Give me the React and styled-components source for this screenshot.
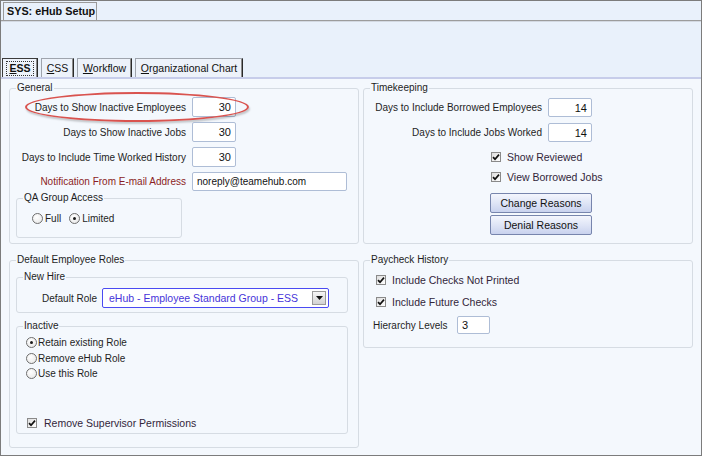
import React from "react";
import styled, { createGlobalStyle } from "styled-components";

const GlobalStyle = createGlobalStyle`
  html, body {
    margin: 0;
    padding: 0;
    background: #ffffff;
  }
`;

const Window = styled.div`
  width: 702px;
  height: 456px;
  box-sizing: border-box;
  border: 1px solid #7c7c7c;
  display: flex;
  flex-direction: column;
  background: #f4f8fd;
  font-family: "Liberation Sans", Arial, sans-serif;
  font-size: 10px;
  color: #1e1e1e;
  overflow: hidden;
`;

const Header = styled.div`
  background: #e9f1fb;
`;

const TitleBar = styled.div`
  height: 20px;
  box-sizing: border-box;
  padding-left: 2px;
  display: flex;
  align-items: flex-end;
  border-bottom: 1px solid #9c9c9c;
  box-shadow: 0 1px 0 #d3d9e2;
`;

const TitleTab = styled.div`
  width: 94px;
  height: 18px;
  box-sizing: border-box;
  border: 1px solid #9a9a9a;
  border-bottom: none;
  background: #e8f0fb;
  font-weight: bold;
  font-size: 10.8px;
  line-height: 17px;
  padding-left: 3px;
  color: #111;
`;

const TabStrip = styled.div`
  padding: 37px 0 0 1px;
  display: flex;
  align-items: flex-end;
  gap: 3px;
  border-bottom: 2px solid #c7cdea;
`;

const Tab = styled.div`
  height: 19px;
  box-sizing: border-box;
  width: ${(p) => p.$w}px;
  border: 1px solid ${(p) => (p.$active ? "#3c3c3c" : "#9fa4ad")};
  border-right: 1px solid #2a2a2a;
  border-bottom: none;
  box-shadow: inset -1px 0 0 #8c8c8c;
  background: ${(p) => (p.$active ? "#eef3fb" : "#edf2fa")};
  display: flex;
  align-items: center;
  justify-content: center;
  font-size: 10.5px;
  font-weight: ${(p) => (p.$active ? "bold" : "normal")};
  color: #111;
`;

const FocusText = styled.span`
  outline: 1px dotted #333;
  outline-offset: 0px;
  padding: 0 2px;
  line-height: 13px;
`;

const Content = styled.div`
  flex: 1;
  display: grid;
  grid-template-columns: 350px 330px;
  column-gap: 4px;
  row-gap: 10px;
  align-content: start;
  align-items: start;
  padding: 3px 0 0 8px;
`;

const Group = styled.fieldset`
  margin: ${(p) => p.$margin || "0"};
  padding: 0;
  min-width: 0;
  width: ${(p) => p.$w}px;
  height: ${(p) => p.$h}px;
  box-sizing: border-box;
  border: 1px solid #d6dce3;
  border-radius: 3px;
`;

const Legend = styled.legend`
  margin-left: 6px;
  padding: 0 1px;
  font-size: 10px;
  line-height: 12px;
  color: #1e1e1e;
`;

const Stack = styled.div`
  display: flex;
  flex-direction: column;
  gap: ${(p) => p.$gap || 0}px;
  padding: ${(p) => p.$pad || "0"};
  height: ${(p) => (p.$fill ? "100%" : "auto")};
  box-sizing: border-box;
`;

const FieldRow = styled.div`
  position: relative;
  display: flex;
  align-items: center;
  gap: ${(p) => (p.$gap === undefined ? 6 : p.$gap)}px;
`;

const Label = styled.div`
  width: ${(p) => p.$w}px;
  text-align: ${(p) => p.$align || "right"};
  color: ${(p) => p.$color || "#1e1e1e"};
  white-space: nowrap;
`;

const Input = styled.div`
  width: ${(p) => p.$w}px;
  height: ${(p) => p.$h || 20}px;
  box-sizing: border-box;
  border: 1px solid #aebdd6;
  border-radius: 2px;
  background: #ffffff;
  display: flex;
  align-items: center;
  justify-content: ${(p) => (p.$left ? "flex-start" : "flex-end")};
  padding: 0 4px;
  font-size: ${(p) => p.$fs || 11}px;
  color: #111;
`;

const Highlight = styled.div`
  position: absolute;
  left: 15px;
  top: -5px;
  width: 224px;
  height: 30px;
  box-sizing: border-box;
  border: 2px solid #d9534f;
  border-radius: 50%;
  box-shadow: 1px 2px 2px rgba(0, 0, 0, 0.2);
  pointer-events: none;
`;

const OptionRow = styled.div`
  display: flex;
  align-items: center;
  height: 13px;
  padding-left: ${(p) => p.$indent || 0}px;
  margin-top: ${(p) => p.$top || 0}px;
`;

const RadioCircle = styled.span`
  width: 11px;
  height: 11px;
  box-sizing: border-box;
  border-radius: 50%;
  border: 1px solid #6e6e6e;
  background: radial-gradient(circle at 40% 35%, #ffffff, #e4e4e4);
  display: inline-flex;
  align-items: center;
  justify-content: center;
  margin-right: ${(p) => p.$gap || 2}px;
  flex-shrink: 0;

  &::after {
    content: "";
    width: 3px;
    height: 3px;
    border-radius: 50%;
    background: ${(p) => (p.$on ? "#1a1a1a" : "transparent")};
  }
`;

const CheckBox = styled.span`
  width: 10px;
  height: 10px;
  box-sizing: border-box;
  border: 1px solid #8a8a8a;
  background: linear-gradient(135deg, #dedede, #ffffff);
  display: inline-flex;
  align-items: center;
  justify-content: center;
  margin-right: ${(p) => p.$gap || 6}px;
  flex-shrink: 0;
`;

const CheckText = styled.span`
  color: #32263a;
  font-size: 10.5px;
  white-space: nowrap;
`;

const Spacer = styled.span`
  width: ${(p) => p.$w}px;
`;

const Button = styled.div`
  width: 102px;
  height: 20px;
  box-sizing: border-box;
  border: 1px solid #7785ad;
  border-radius: 2px;
  background: linear-gradient(#f4f6fd, #dfe5f6 50%, #c9d2ee);
  display: flex;
  align-items: center;
  justify-content: center;
  font-size: 10.5px;
  color: #111;
`;

const Select = styled.div`
  width: 227px;
  height: 20px;
  box-sizing: border-box;
  border: 1px solid #4b4bf2;
  border-radius: 2px;
  background: #ffffff;
  display: flex;
  align-items: center;
  padding: 0 2px 0 6px;
  font-size: 10.5px;
  color: #4634d9;
`;

const SelectText = styled.span`
  flex: 1;
  white-space: nowrap;
`;

const DropButton = styled.span`
  width: 14px;
  height: 14px;
  box-sizing: border-box;
  border: 1px solid #9a9a9a;
  background: linear-gradient(#f6f6f6, #d2d2d2);
  display: inline-flex;
  align-items: center;
  justify-content: center;
`;

const Check = () => (
  <svg width="8" height="8" viewBox="0 0 8 8">
    <path d="M1 4.2 L3 6.2 L7 1.6" fill="none" stroke="#111" strokeWidth="1.7" />
  </svg>
);

const Checked = ({ children, indent, top, gap }) => (
  <OptionRow $indent={indent} $top={top}>
    <CheckBox $gap={gap}>
      <Check />
    </CheckBox>
    <CheckText>{children}</CheckText>
  </OptionRow>
);

const Radio = ({ on, children, gap }) => (
  <>
    <RadioCircle $on={on} $gap={gap} />
    <span>{children}</span>
  </>
);

export default function App() {
  return (
    <>
      <GlobalStyle />
      <Window>
        <Header>
          <TitleBar>
            <TitleTab>SYS: eHub Setup</TitleTab>
          </TitleBar>
          <TabStrip>
            <Tab $w={36} $active>
              <FocusText>
                <u>E</u>SS
              </FocusText>
            </Tab>
            <Tab $w={33}>
              <u>C</u>SS
            </Tab>
            <Tab $w={55}>
              <u>W</u>orkflow
            </Tab>
            <Tab $w={108}>
              <u>O</u>rganizational Chart
            </Tab>
          </TabStrip>
        </Header>

        <Content>
          <Group $w={350} $h={162}>
            <Legend>General</Legend>
            <Stack $gap={5} $pad="3px 0 0 0">
              <FieldRow>
                <Highlight />
                <Label $w={176}>Days to Show Inactive Employees</Label>
                <Input $w={44}>30</Input>
              </FieldRow>
              <FieldRow>
                <Label $w={176}>Days to Show Inactive Jobs</Label>
                <Input $w={44}>30</Input>
              </FieldRow>
              <FieldRow>
                <Label $w={176}>Days to Include Time Worked History</Label>
                <Input $w={44}>30</Input>
              </FieldRow>
              <FieldRow>
                <Label $w={176} $color="#8b1d24">
                  Notification From E-mail Address
                </Label>
                <Input $w={155} $h={19} $left $fs={10}>
                  noreply@teamehub.com
                </Input>
              </FieldRow>
            </Stack>
            <Group $w={166} $h={46} $margin="1px 0 0 6px">
              <Legend>QA Group Access</Legend>
              <OptionRow $indent={15} $top={8}>
                <Radio>Full</Radio>
                <Spacer $w={8} />
                <Radio on>Limited</Radio>
              </OptionRow>
            </Group>
          </Group>

          <Group $w={330} $h={162}>
            <Legend>Timekeeping</Legend>
            <Stack $gap={6} $pad="4px 0 0 0">
              <FieldRow>
                <Label $w={178}>Days to Include Borrowed Employees</Label>
                <Input $w={44} $h={19}>14</Input>
              </FieldRow>
              <FieldRow>
                <Label $w={178}>Days to Include Jobs Worked</Label>
                <Input $w={44} $h={19}>14</Input>
              </FieldRow>
            </Stack>
            <Stack $pad="0 0 0 126px">
              <Checked indent={1} top={8}>Show Reviewed</Checked>
              <Checked indent={1} top={7}>View Borrowed Jobs</Checked>
              <Stack $gap={2} $pad="10px 0 0 0">
                <Button>Change Reasons</Button>
                <Button>Denial Reasons</Button>
              </Stack>
            </Stack>
          </Group>

          <Group $w={350} $h={194}>
            <Legend>Default Employee Roles</Legend>
            <Group $w={332} $h={42} $margin="5px 0 0 6px">
              <Legend>New Hire</Legend>
              <FieldRow $gap={5} style={{ marginTop: 5 }}>
                <Label $w={80}>Default Role</Label>
                <Select>
                  <SelectText>eHub - Employee Standard Group - ESS</SelectText>
                  <DropButton>
                    <svg width="7" height="4" viewBox="0 0 7 4">
                      <path d="M0 0 H7 L3.5 4 Z" fill="#111" />
                    </svg>
                  </DropButton>
                </Select>
              </FieldRow>
            </Group>
            <Group $w={332} $h={114} $margin="7px 0 0 6px">
              <Legend>Inactive</Legend>
              <Stack $fill $pad="4px 0 4px 0">
                <OptionRow $indent={9}>
                  <Radio on gap={1}>Retain existing Role</Radio>
                </OptionRow>
                <OptionRow $indent={9} $top={2.5}>
                  <Radio gap={1}>Remove eHub Role</Radio>
                </OptionRow>
                <OptionRow $indent={9} $top={2.5}>
                  <Radio gap={1}>Use this Role</Radio>
                </OptionRow>
                <Stack style={{ marginTop: "auto" }}>
                  <Checked indent={10} gap={7}>
                    Remove Supervisor Permissions
                  </Checked>
                </Stack>
              </Stack>
            </Group>
          </Group>

          <Group $w={330} $h={94}>
            <Legend>Paycheck History</Legend>
            <Checked indent={12} top={7} gap={6}>
              Include Checks Not Printed
            </Checked>
            <Checked indent={12} top={9} gap={6}>
              Include Future Checks
            </Checked>
            <FieldRow $gap={0} style={{ marginTop: 8, paddingLeft: 9 }}>
              <Label $w={84} $align="left">
                Hierarchy Levels
              </Label>
              <Input $w={33} $h={18} $left>
                3
              </Input>
            </FieldRow>
          </Group>
        </Content>
      </Window>
    </>
  );
}
